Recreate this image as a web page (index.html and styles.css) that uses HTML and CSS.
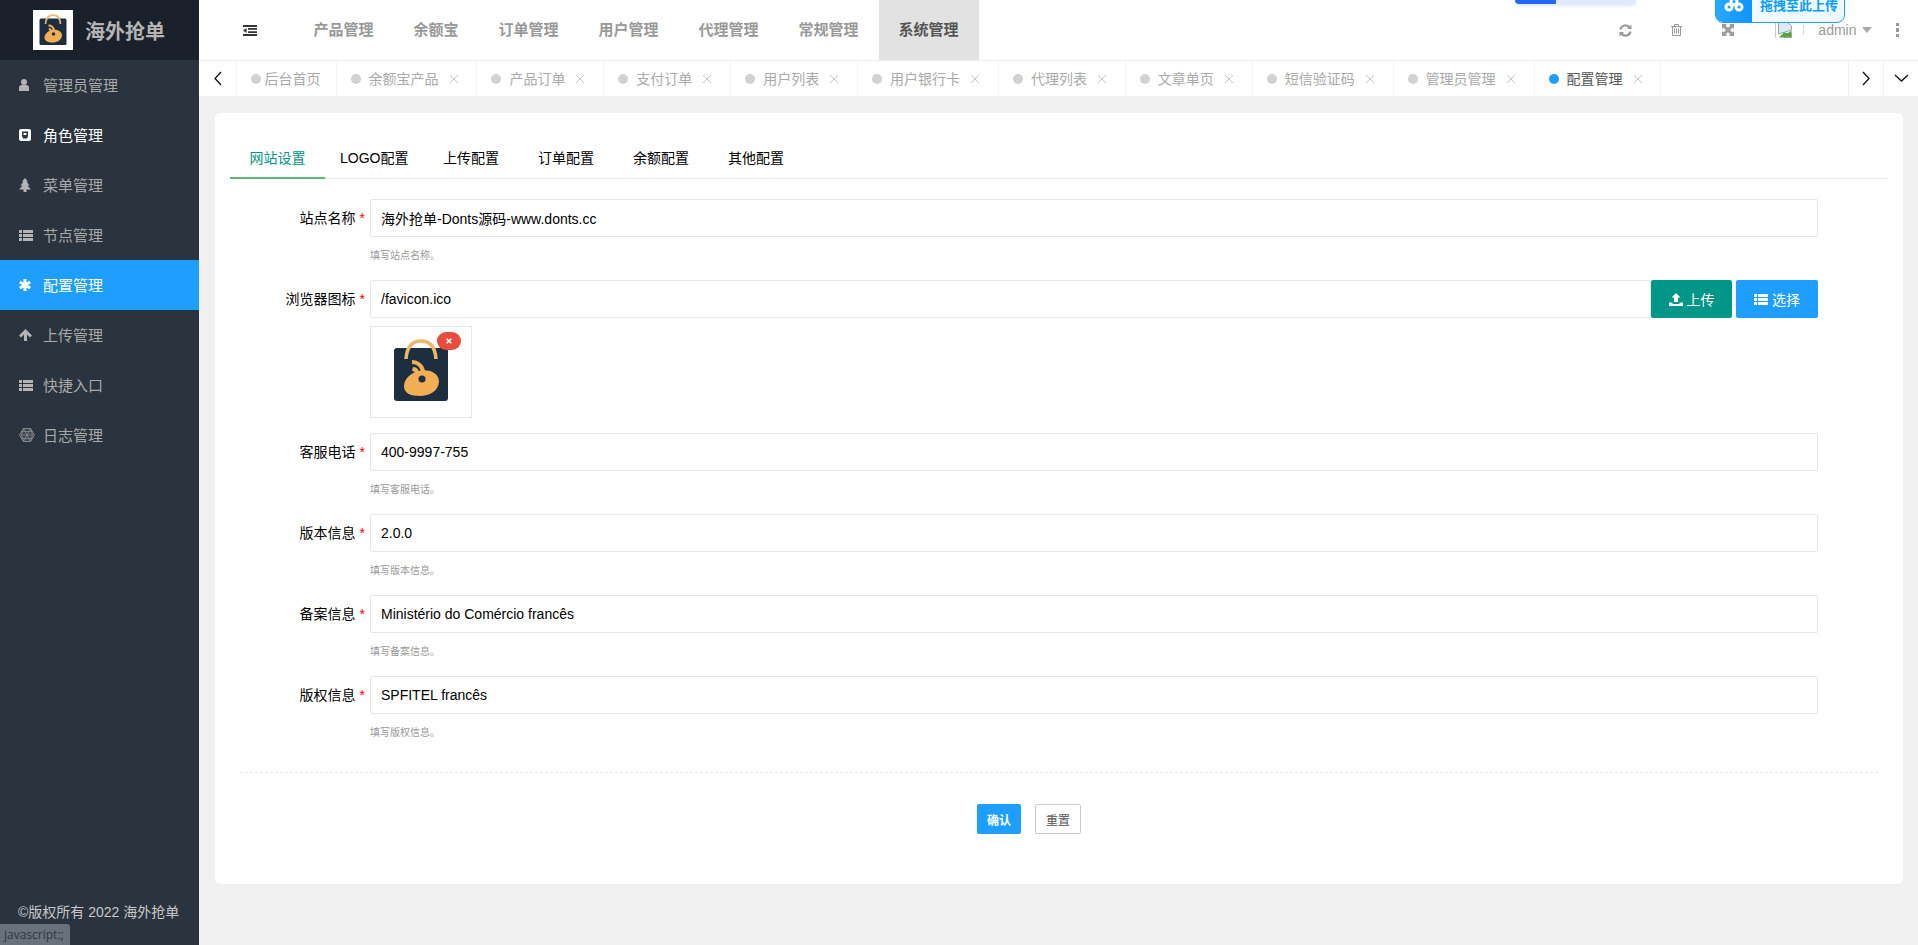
FILE: index.html
```html
<!DOCTYPE html>
<html lang="zh-CN">
<head>
    <meta charset="UTF-8">
    <meta name="viewport" content="width=device-width, initial-scale=1.0">
    <title>配置管理 - 海外抢单</title>
    <link rel="stylesheet" href="styles.css">
</head>
<body>
    <!-- Shared icons -->
    <svg class="icon-defs" aria-hidden="true">
        <defs>
            <filter id="soft"><feGaussianBlur stdDeviation="0.7"/></filter>
        </defs>
        <symbol id="bag" viewBox="0 0 56 62">
            <g filter="url(#soft)">
                <path d="M1 12Q1 9 4 9H52Q55 9 55 12V59Q55 62 52 62H4Q1 62 1 59Z" fill="#1f2d40"/>
                <path d="M13 20C14 6 20 2 28 2S42 6 43 20" fill="none" stroke="#eeb76b" stroke-width="3.500"/>
                <path d="M11 47C11 39 19 34 25 32C33 30 45 32 46 42C46 52 36 57 27 57C17 57 11 54 11 47Z" fill="#f0ae55"/>
                <path d="M19 21C25 21 31 25 32 32L28 33C27 28 24 25 19 25ZM20 28C23 28 26 30 26 34L22 35C22 33 21 32 19 32Z" fill="#f0ae55"/>
                <circle cx="29" cy="40" r="3.500" fill="#1f2d40"/>
            </g>
        </symbol>
        <symbol id="bars" viewBox="0 0 14 11">
            <path d="M0 0h3v3H0zM4 0h10v3H4zM0 4h3v3H0zM4 4h10v3H4zM0 8h3v3H0zM4 8h10v3H4z"/>
        </symbol>
        <symbol id="close" viewBox="0 0 10 10">
            <path d="M1 1L9 9M9 1L1 9" fill="none" stroke="currentColor" stroke-width="1"/>
        </symbol>
    </svg>

    <div class="app">
        <aside class="sidebar">
            <div class="brand">
                <div class="brand-logo"><svg class="brand-bag"><use href="#bag"/></svg></div>
                <span class="brand-name">海外抢单</span>
            </div>
            <ul class="menu">
                <li class="menu-item">
                    <span class="menu-icon"><svg width="10" height="12" viewBox="0 0 10 12"><circle cx="5" cy="3" r="3"/><path d="M0 12V9a3 3 0 0 1 3-3h4a3 3 0 0 1 3 3v3z"/></svg></span>
                    管理员管理
                </li>
                <li class="menu-item menu-item-light">
                    <span class="menu-icon"><svg width="12" height="12" viewBox="0 0 12 12"><rect width="12" height="12" rx="2"/><path d="M3 2.500h6v4.500l-1 2.500H4L3 7z" fill="#2a333e"/><path d="M4.500 4h3v2h-3z" fill="#fff"/></svg></span>
                    角色管理
                </li>
                <li class="menu-item">
                    <span class="menu-icon"><svg width="12" height="14" viewBox="0 0 12 14"><path d="M6 0L9 3.500H7.500L10.500 7.500H8.500L12 11.500H7.500V14H4.500V11.500H0L3.500 7.500H1.500L4.500 3.500H3z"/></svg></span>
                    菜单管理
                </li>
                <li class="menu-item">
                    <span class="menu-icon"><svg width="14" height="11"><use href="#bars"/></svg></span>
                    节点管理
                </li>
                <li class="menu-item menu-item-active">
                    <span class="menu-icon"><svg width="12" height="12" viewBox="0 0 12 12"><path d="M6 0v12M.8 3l10.400 6M11.200 3L.8 9" stroke="#fff" stroke-width="3"/></svg></span>
                    配置管理
                </li>
                <li class="menu-item">
                    <span class="menu-icon"><svg width="13" height="12" viewBox="0 0 13 12"><path d="M6.500 0L13 6.500 11 8.500 8 5.500V12H5V5.500L2 8.500 0 6.500z"/></svg></span>
                    上传管理
                </li>
                <li class="menu-item">
                    <span class="menu-icon"><svg width="14" height="11"><use href="#bars"/></svg></span>
                    快捷入口
                </li>
                <li class="menu-item">
                    <span class="menu-icon"><svg width="16" height="14" viewBox="0 0 16 14" fill="#3f4751" stroke="#a8a8a8" stroke-width="0.7"><path d="M4.500.5h7L15.500 7l-4 6.500h-7L.5 7z"/><path d="M4.500.5L2.500 7l2 6.500M11.500.5L13.500 7l-2 6.500M4.500.5l7 13M11.500.5l-7 13M2.500 7h11M2.500 3.500h11M2.500 10.500h11" stroke-width="0.5"/></svg></span>
                    日志管理
                </li>
            </ul>
            <div class="copyright">©版权所有 2022 海外抢单</div>
        </aside>

        <div class="main">
            <header class="topbar">
                <div class="fold-btn">
                    <svg width="14" height="11" viewBox="0 0 14 11"><path d="M0 0h14v2H0zM5 3h9v1.700H5zM5 6.300h9V8H5zM0 9h14v2H0zM3.500 3v5L0 5.500z" fill="#333"/></svg>
                </div>
                <nav class="topnav">
                    <a class="topnav-item">产品管理</a>
                    <a class="topnav-item">余额宝</a>
                    <a class="topnav-item">订单管理</a>
                    <a class="topnav-item">用户管理</a>
                    <a class="topnav-item">代理管理</a>
                    <a class="topnav-item">常规管理</a>
                    <a class="topnav-item topnav-item-active">系统管理</a>
                </nav>
                <div class="tools">
                    <span class="tool"><svg width="13" height="13" viewBox="0 0 13 13" fill="none" stroke="#999" stroke-width="2.200"><path d="M1.500 5.500A5 5 0 0 1 10.500 3.500M11.500 7.500A5 5 0 0 1 2.500 9.500"/><path d="M12.500 .5v4.500H8zM.5 12.500V8H5z" fill="#999" stroke="none"/></svg></span>
                    <span class="tool"><svg width="11" height="12" viewBox="0 0 11 12" fill="none" stroke="#999"><path d="M0 2.500h11M3.500 2.500V.5h4v2M1.500 2.500v9h8v-9M3.500 4.500v5M5.500 4.500v5M7.500 4.500v5"/></svg></span>
                    <span class="tool"><svg width="12" height="12" viewBox="0 0 12 12"><path d="M0 0h5L3.500 1.500 6 4 8.500 1.500 7 0h5v5l-1.500-1.500L8 6l2.500 2.500L12 7v5H7l1.500-1.500L6 8l-2.500 2.500L5 12H0V7l1.500 1.500L4 6 1.500 3.500 0 5z" fill="#999"/></svg></span>
                    <span class="avatar">
                        <svg width="18" height="16" viewBox="0 0 18 16">
                            <path d="M.5 .5v15" stroke="#c8c8c8"/>
                            <path d="M3.500 .5h9l4 3.500v4L3.500 12z" fill="#dfe9f7" stroke="#a0a0a0"/>
                            <path d="M4 15.500l5-5 4 .5 3.500-2.500v7z" fill="#58a53c"/>
                            <path d="M16.500 11v4.500H9" fill="none" stroke="#a0a0a0"/>
                        </svg>
                    </span>
                    <span class="tool-sep"></span>
                    <span class="user-name">admin</span>
                    <span class="caret"></span>
                    <span class="more"><i></i><i></i><i></i></span>
                </div>
                <!-- Browser extension widgets sitting over the bar -->
                <div class="float-pill"><span class="float-pill-left"></span></div>
                <div class="float-drop">
                    <span class="float-drop-icon">
                        <svg width="20" height="15" viewBox="0 0 20 15" fill="none" stroke="#fff" stroke-width="3"><circle cx="10" cy="4.500" r="3"/><circle cx="5" cy="10" r="3"/><circle cx="15" cy="10" r="3"/></svg>
                    </span>
                    <span class="float-drop-text">拖拽至此上传</span>
                </div>
            </header>

            <div class="pagetabs">
                <span class="pagetabs-btn pagetabs-btn-left"><svg width="9" height="15" viewBox="0 0 9 15"><path d="M8 1L2 7.500 8 14" fill="none" stroke="#111" stroke-width="1.300"/></svg></span>
                <div class="pagetabs-list">
                    <div class="pagetab pagetab-home"><i class="pagetab-dot"></i>后台首页</div>
                    <div class="pagetab"><i class="pagetab-dot"></i>余额宝产品<svg class="pagetab-close"><use href="#close"/></svg></div>
                    <div class="pagetab"><i class="pagetab-dot"></i>产品订单<svg class="pagetab-close"><use href="#close"/></svg></div>
                    <div class="pagetab"><i class="pagetab-dot"></i>支付订单<svg class="pagetab-close"><use href="#close"/></svg></div>
                    <div class="pagetab"><i class="pagetab-dot"></i>用户列表<svg class="pagetab-close"><use href="#close"/></svg></div>
                    <div class="pagetab"><i class="pagetab-dot"></i>用户银行卡<svg class="pagetab-close"><use href="#close"/></svg></div>
                    <div class="pagetab"><i class="pagetab-dot"></i>代理列表<svg class="pagetab-close"><use href="#close"/></svg></div>
                    <div class="pagetab"><i class="pagetab-dot"></i>文章单页<svg class="pagetab-close"><use href="#close"/></svg></div>
                    <div class="pagetab"><i class="pagetab-dot"></i>短信验证码<svg class="pagetab-close"><use href="#close"/></svg></div>
                    <div class="pagetab"><i class="pagetab-dot"></i>管理员管理<svg class="pagetab-close"><use href="#close"/></svg></div>
                    <div class="pagetab pagetab-active"><i class="pagetab-dot"></i>配置管理<svg class="pagetab-close"><use href="#close"/></svg></div>
                </div>
                <span class="pagetabs-btn"><svg width="9" height="15" viewBox="0 0 9 15"><path d="M1 1L7 7.500 1 14" fill="none" stroke="#111" stroke-width="1.300"/></svg></span>
                <span class="pagetabs-btn"><svg width="15" height="9" viewBox="0 0 15 9"><path d="M1 1L7.500 7 14 1" fill="none" stroke="#111" stroke-width="1.300"/></svg></span>
            </div>

            <div class="content">
                <div class="card">
                    <ul class="subtabs">
                        <li class="subtab subtab-active">网站设置</li>
                        <li class="subtab">LOGO配置</li>
                        <li class="subtab">上传配置</li>
                        <li class="subtab">订单配置</li>
                        <li class="subtab">余额配置</li>
                        <li class="subtab">其他配置</li>
                    </ul>

                    <form class="form">
                        <div class="form-row">
                            <label class="form-label">站点名称<em>*</em></label>
                            <div class="form-field">
                                <input class="form-input" type="text" value="海外抢单-Donts源码-www.donts.cc">
                                <div class="form-hint">填写站点名称。</div>
                            </div>
                        </div>
                        <div class="form-row">
                            <label class="form-label">浏览器图标<em>*</em></label>
                            <div class="form-field">
                                <div class="input-group">
                                    <input class="form-input" type="text" value="/favicon.ico">
                                    <button class="btn btn-upload" type="button">
                                        <svg width="14" height="13" viewBox="0 0 14 13"><path d="M7 0l4.500 4.500H9V9H5V4.500H2.500zM0 9.500h3.500V11h7V9.500H14V13H0z" fill="#fff"/></svg>上传
                                    </button>
                                    <button class="btn btn-select" type="button">
                                        <svg width="14" height="11"><use href="#bars" fill="#fff"/></svg>选择
                                    </button>
                                </div>
                                <div class="thumb">
                                    <svg class="thumb-bag"><use href="#bag"/></svg>
                                    <span class="thumb-remove"><svg width="6" height="6" viewBox="0 0 6 6"><path d="M.7 .7l4.600 4.600M5.300 .7L.7 5.300" stroke="#fff" stroke-width="1.500"/></svg></span>
                                </div>
                            </div>
                        </div>
                        <div class="form-row">
                            <label class="form-label">客服电话<em>*</em></label>
                            <div class="form-field">
                                <input class="form-input" type="text" value="400-9997-755">
                                <div class="form-hint">填写客服电话。</div>
                            </div>
                        </div>
                        <div class="form-row">
                            <label class="form-label">版本信息<em>*</em></label>
                            <div class="form-field">
                                <input class="form-input" type="text" value="2.0.0">
                                <div class="form-hint">填写版本信息。</div>
                            </div>
                        </div>
                        <div class="form-row">
                            <label class="form-label">备案信息<em>*</em></label>
                            <div class="form-field">
                                <input class="form-input" type="text" value="Ministério do Comércio francês">
                                <div class="form-hint">填写备案信息。</div>
                            </div>
                        </div>
                        <div class="form-row">
                            <label class="form-label">版权信息<em>*</em></label>
                            <div class="form-field">
                                <input class="form-input" type="text" value="SPFITEL francês">
                                <div class="form-hint">填写版权信息。</div>
                            </div>
                        </div>

                        <div class="form-actions">
                            <button class="btn-small btn-confirm" type="button">确认</button>
                            <button class="btn-small btn-reset" type="reset">重置</button>
                        </div>
                    </form>
                </div>
            </div>
        </div>
    </div>

    <div class="status-bubble">javascript:;</div>
</body>
</html>
```

FILE: styles.css
```css
* {
    margin: 0;
    padding: 0;
    box-sizing: border-box;
}

html, body {
    height: 100%;
    overflow: hidden;
}

body {
    font-family: "Liberation Sans", "Noto Sans CJK SC", sans-serif;
    font-size: 14px;
    color: #000;
    background-color: #f1f1f1;
}

ul {
    list-style: none;
}

.icon-defs {
    position: absolute;
    width: 0;
    height: 0;
}

.app {
    display: flex;
    height: 945px;
}

/* Sidebar */
.sidebar {
    display: flex;
    flex-direction: column;
    flex: 0 0 199px;
    background-color: #2a333e;
}

.brand {
    display: flex;
    align-items: center;
    height: 60px;
    padding-left: 33px;
    background-color: #1b212a;
}

.brand-logo {
    display: flex;
    justify-content: center;
    align-items: flex-end;
    width: 40px;
    height: 40px;
    padding-bottom: 5px;
    background-color: #fff;
}

.brand-bag {
    width: 28px;
    height: 31px;
}

.brand-name {
    margin-left: 12px;
    font-size: 20px;
    font-weight: bold;
    color: #b4b4b4;
}

.menu-item {
    display: flex;
    align-items: center;
    height: 50px;
    padding-bottom: 2px;
    font-size: 15px;
    color: #a9a9a9;
}

.menu-item-light {
    color: #fff;
}

.menu-item-active {
    background-color: #1e9fff;
    color: #fff;
}

.menu-icon {
    display: flex;
    align-items: center;
    width: 43px;
    margin-top: 2px;
    padding-left: 19px;
    fill: #b4b4b4;
}

.menu-item-light .menu-icon {
    fill: #fff;
}

.copyright {
    margin-top: auto;
    margin-bottom: 24px;
    padding-left: 18px;
    line-height: 18px;
    color: #c8c8c8;
}

.status-bubble {
    position: absolute;
    left: 0;
    bottom: 0;
    width: 70px;
    height: 21px;
    padding-left: 4px;
    line-height: 21px;
    font-family: "Open Sans", sans-serif;
    font-size: 12px;
    color: #30363d;
    background-color: #69717c;
    border-top-right-radius: 3px;
}

/* Top bar */
.main {
    display: flex;
    flex-direction: column;
    flex: 1;
    min-width: 0;
}

.topbar {
    position: relative;
    display: flex;
    align-items: center;
    height: 60px;
    background-color: #fff;
}

.fold-btn {
    display: flex;
    align-items: center;
    width: 94.500px;
    padding-left: 44px;
}

.topnav {
    display: flex;
    height: 100%;
}

.topnav-item {
    padding: 0 20px;
    line-height: 60px;
    font-size: 15px;
    font-weight: bold;
    color: #999;
}

.topnav-item-active {
    background-color: #e2e2e2;
    color: #555;
}

.tools {
    display: flex;
    align-items: center;
    margin-left: auto;
    padding-right: 19px;
}

.tool {
    display: flex;
    justify-content: center;
    width: 51px;
}

.avatar {
    display: flex;
    margin-left: 22px;
}

.tool-sep {
    width: 1px;
    height: 10px;
    margin-left: 10px;
    background-color: #d8d8d8;
}

.user-name {
    margin-left: 14px;
    color: #999;
}

.caret {
    width: 0;
    height: 0;
    margin-left: 5px;
    border-style: solid;
    border-width: 6px 5.500px 0;
    border-color: #aaa transparent transparent;
}

.more {
    display: flex;
    flex-direction: column;
    gap: 2px;
    margin-left: 24px;
}

.more i {
    display: block;
    width: 3.500px;
    height: 3.500px;
    background-color: #999;
}

.float-pill {
    position: absolute;
    top: 0;
    right: 282px;
    width: 121px;
    height: 4px;
    background-color: #e0e9fb;
    border-radius: 0 0 6px 6px;
    box-shadow: 0 1px 4px rgba(36, 104, 242, 0.25);
    overflow: hidden;
}

.float-pill-left {
    display: block;
    width: 41px;
    height: 100%;
    background-color: #2468f2;
}

.float-drop {
    position: absolute;
    top: -13px;
    right: 73px;
    display: flex;
    align-items: center;
    width: 130px;
    height: 36px;
    background-color: #eef8ff;
    border: 1px solid #1e9fff;
    border-radius: 0 0 8px 8px;
    overflow: hidden;
}

.float-drop-icon {
    display: flex;
    justify-content: center;
    align-items: center;
    flex: 0 0 36px;
    height: 100%;
    padding-bottom: 2px;
    background: linear-gradient(90deg, #2aa8ff, #0d94ff);
}

.float-drop-text {
    margin-left: 8px;
    padding-bottom: 1px;
    font-size: 13px;
    font-weight: bold;
    color: #0b9df8;
}

/* Page tabs */
.pagetabs {
    display: flex;
    height: 36px;
    background-color: #fff;
    border-top: 1px solid #f0f0f0;
}

.pagetabs-btn {
    display: flex;
    justify-content: center;
    align-items: center;
    flex: 0 0 35px;
    border-left: 1px solid #f0f0f0;
}

.pagetabs-btn-left {
    flex-basis: 36.500px;
    border-left: 0;
}

.pagetabs-list {
    display: flex;
    flex: 1;
    min-width: 0;
    border-left: 1px solid #f4f4f4;
}

.pagetab {
    display: flex;
    align-items: center;
    padding: 0 17.900px 2px 14px;
    color: #aaa;
    border-right: 1px solid #f4f4f4;
}

.pagetab-home {
    padding-right: 15px;
}

.pagetab-dot {
    width: 10px;
    height: 10px;
    margin-top: 2px;
    margin-right: 8px;
    background-color: #d2d2d2;
    border-radius: 50%;
}

.pagetab-home .pagetab-dot {
    margin-right: 4px;
}

.pagetab-close {
    width: 10px;
    height: 10px;
    margin-top: 3px;
    margin-left: 10px;
    color: #c4c4c4;
}

.pagetab-active {
    color: #555;
}

.pagetab-active .pagetab-dot {
    background-color: #1e9fff;
}

/* Card with the form */
.content {
    flex: 1;
    padding: 17px 15px 61px 16px;
    background-color: #f1f1f1;
}

.card {
    height: 100%;
    padding: 25px 15px 0 15px;
    background-color: #fff;
    border-radius: 5px;
}

.subtabs {
    display: flex;
    height: 41px;
    border-bottom: 1px solid #e6e6e6;
}

.subtab {
    min-width: 95px;
    height: 41px;
    padding: 0 15px;
    line-height: 40px;
    text-align: center;
}

.subtab-active {
    color: #009688;
    border-bottom: 2px solid #5fb878;
}

.form {
    padding-top: 20px;
}

.form-row {
    display: flex;
    padding-right: 70px;
}

.form-label {
    flex: 0 0 140px;
    padding-right: 5px;
    line-height: 38px;
    text-align: right;
}

.form-label em {
    margin-left: 4px;
    font-style: normal;
    color: #ff0000;
}

.form-field {
    flex: 1;
    min-width: 0;
    padding-bottom: 15px;
}

.form-input {
    display: block;
    width: 100%;
    height: 38px;
    padding-left: 10px;
    font-family: inherit;
    font-size: 14px;
    color: #000;
    border: 1px solid #e6e6e6;
    border-radius: 2px;
    outline: none;
}

.form-hint {
    height: 28px;
    padding-top: 11px;
    line-height: 16px;
    font-size: 10px;
    color: #999;
}

.input-group {
    display: flex;
    gap: 4px;
}

.input-group .form-input {
    flex: 1;
    width: auto;
    min-width: 0;
    margin-right: -4px;
}

.btn {
    display: flex;
    justify-content: center;
    align-items: center;
    gap: 4px;
    height: 38px;
    font-family: inherit;
    font-size: 14px;
    color: #fff;
    border: 0;
    border-radius: 2px;
}

.btn-upload {
    flex: 0 0 81px;
    background-color: #009688;
}

.btn-select {
    flex: 0 0 82px;
    background-color: #1e9fff;
}

.thumb {
    position: relative;
    display: flex;
    justify-content: center;
    width: 102px;
    height: 92px;
    margin-top: 8px;
    padding-top: 12px;
    border: 1px solid #e6e6e6;
}

.thumb-bag {
    width: 56px;
    height: 62px;
}

.thumb-remove {
    position: absolute;
    top: 5px;
    right: 10px;
    display: flex;
    justify-content: center;
    align-items: center;
    width: 24px;
    height: 18px;
    background-color: #e74c3c;
    border-radius: 9px;
}

.form-actions {
    display: flex;
    justify-content: center;
    gap: 14px;
    margin: 15px 10px 0 10px;
    padding: 31px 60px 0 0;
    border-top: 1px dashed #e6e6e6;
}

.btn-small {
    height: 30px;
    font-family: inherit;
    font-size: 12px;
    border-radius: 2px;
}

.btn-confirm {
    width: 44px;
    font-weight: bold;
    color: #fff;
    background-color: #1e9fff;
    border: 0;
}

.btn-reset {
    width: 46px;
    color: #555;
    background-color: #fff;
    border: 1px solid #c9c9c9;
}
```
